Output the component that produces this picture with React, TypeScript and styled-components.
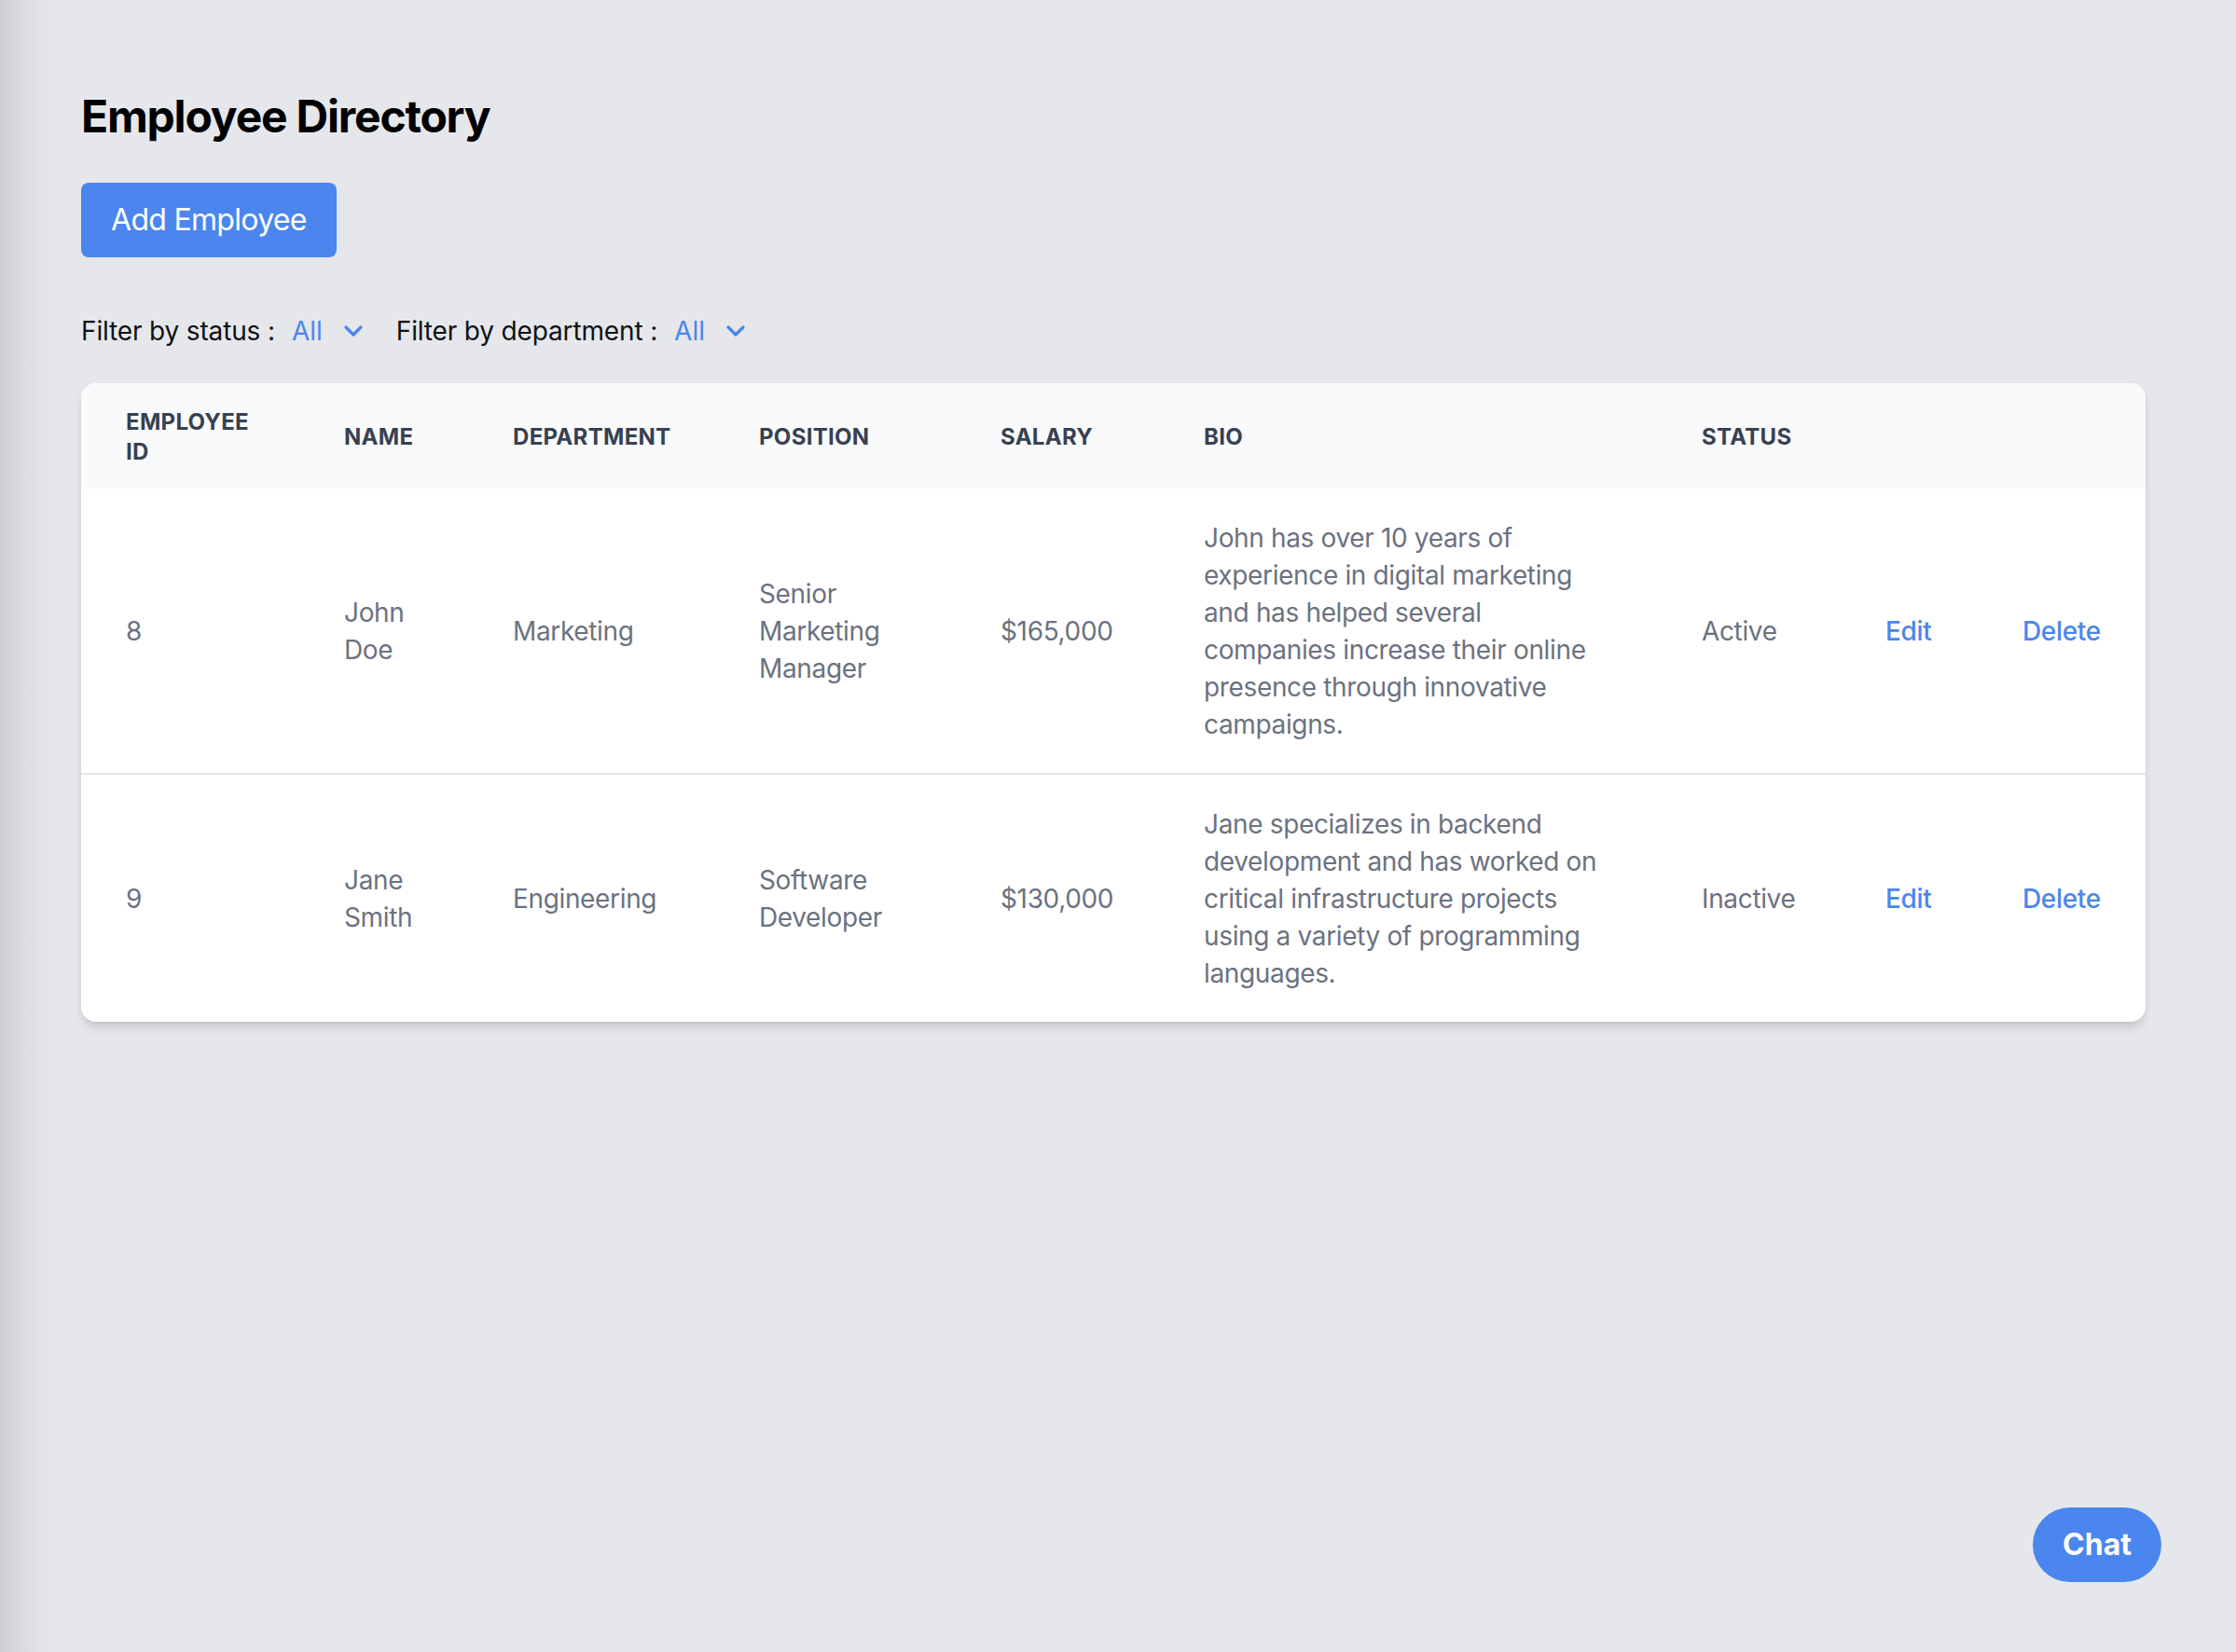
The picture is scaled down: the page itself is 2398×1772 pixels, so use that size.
import React from "react";
import styled, { createGlobalStyle } from "styled-components";

const GlobalStyle = createGlobalStyle`
  html, body {
    margin: 0;
    padding: 0;
  }
  body {
    min-height: 100vh;
    background: linear-gradient(to right, #cdcfd3 0px, #d9dadf 20px, #e2e3e7 45px, #e5e7eb 64px, #e5e7eb 100%);
    font-family: Inter, "Noto Sans", "Liberation Sans", sans-serif;
    color: #111827;
  }
  * { box-sizing: border-box; }
`;

const Page = styled.div`
  min-height: 100vh;
  padding: 93px 97px 0 87px;
`;

const Title = styled.h1`
  margin: 0;
  font-size: 48px;
  line-height: 64px;
  font-weight: 700;
  color: #000;
  letter-spacing: -1.2px;
`;

const PrimaryButton = styled.button`
  display: inline-block;
  margin-top: 39px;
  height: 80px;
  padding: 0 32px;
  border: none;
  border-radius: 8px;
  background: #4a86ee;
  color: #fff;
  font-family: inherit;
  font-size: 32px;
  line-height: 48px;
  font-weight: 400;
  letter-spacing: -0.7px;
  cursor: pointer;
`;

const FilterBar = styled.div`
  display: flex;
  align-items: center;
  gap: 35px;
  margin-top: 59px;
  height: 40px;
`;

const FilterGroup = styled.div`
  display: flex;
  align-items: center;
  gap: 18px;
`;

const FilterLabel = styled.span`
  font-size: 28px;
  line-height: 40px;
  color: #111;
  letter-spacing: -0.15px;
`;

const Select = styled.span`
  display: inline-flex;
  align-items: center;
  gap: 22px;
  font-size: 28px;
  line-height: 40px;
  color: #4a86ee;
`;

const Card = styled.div`
  margin-top: 36px;
  background: #fff;
  border-radius: 16px;
  overflow: hidden;
  box-shadow: 0 8px 12px -2px rgba(0, 0, 0, 0.12), 0 3px 6px -2px rgba(0, 0, 0, 0.08);
`;

const Table = styled.table`
  width: 100%;
  table-layout: fixed;
  border-collapse: collapse;
`;

const HeadRow = styled.tr`
  background: #f9fafb;
`;

const HeadCell = styled.th`
  padding: 26px 48px 23px;
  text-align: left;
  vertical-align: middle;
  font-size: 24px;
  line-height: 32px;
  font-weight: 700;
  letter-spacing: 0.3px;
  text-transform: uppercase;
  color: #374151;
`;

const BodyRow = styled.tr`
  & + & td {
    border-top: 2px solid #e5e7eb;
  }
`;

const Cell = styled.td<{ $link?: boolean }>`
  padding: 33px 48px 32px;
  vertical-align: middle;
  font-size: 28px;
  line-height: 40px;
  letter-spacing: -0.35px;
  color: ${(p) => (p.$link ? "#4a86ee" : "#6b7280")};
  font-weight: ${(p) => (p.$link ? 500 : 400)};
`;

const ChatButton = styled.button`
  position: fixed;
  right: 80px;
  bottom: 75px;
  height: 80px;
  padding: 0 32px;
  border: none;
  border-radius: 40px;
  background: #4a86ee;
  color: #fff;
  font-family: inherit;
  font-size: 32px;
  line-height: 48px;
  font-weight: 700;
  cursor: pointer;
`;

const Chevron = () => (
  <svg width="22" height="14" viewBox="0 0 22 14" fill="none">
    <path d="M3 3l8 8 8-8" stroke="#4a86ee" strokeWidth="3.2" strokeLinecap="round" strokeLinejoin="round" />
  </svg>
);

const colWidths = [234, 181, 264, 259, 218, 534, 197, 147, 180];

const employees = [
  {
    id: 8,
    name: "John Doe",
    department: "Marketing",
    position: "Senior Marketing Manager",
    salary: "$165,000",
    bio: "John has over 10 years of experience in digital marketing and has helped several companies increase their online presence through innovative campaigns.",
    status: "Active",
  },
  {
    id: 9,
    name: "Jane Smith",
    department: "Engineering",
    position: "Software Developer",
    salary: "$130,000",
    bio: "Jane specializes in backend development and has worked on critical infrastructure projects using a variety of programming languages.",
    status: "Inactive",
  },
];

const headers = ["Employee ID", "Name", "Department", "Position", "Salary", "Bio", "Status", "", ""];

export default function App() {
  return (
    <>
      <GlobalStyle />
      <Page>
        <Title>Employee Directory</Title>
        <PrimaryButton>Add Employee</PrimaryButton>
        <FilterBar>
          <FilterGroup>
            <FilterLabel>Filter by status :</FilterLabel>
            <Select>
              All <Chevron />
            </Select>
          </FilterGroup>
          <FilterGroup>
            <FilterLabel>Filter by department :</FilterLabel>
            <Select>
              All <Chevron />
            </Select>
          </FilterGroup>
        </FilterBar>
        <Card>
          <Table>
            <colgroup>
              {colWidths.map((w, i) => (
                <col key={i} style={{ width: w }} />
              ))}
            </colgroup>
            <thead>
              <HeadRow>
                {headers.map((h, i) => (
                  <HeadCell key={i}>{h}</HeadCell>
                ))}
              </HeadRow>
            </thead>
            <tbody>
              {employees.map((e) => (
                <BodyRow key={e.id}>
                  <Cell>{e.id}</Cell>
                  <Cell>{e.name}</Cell>
                  <Cell>{e.department}</Cell>
                  <Cell>{e.position}</Cell>
                  <Cell>{e.salary}</Cell>
                  <Cell>{e.bio}</Cell>
                  <Cell>{e.status}</Cell>
                  <Cell $link>Edit</Cell>
                  <Cell $link>Delete</Cell>
                </BodyRow>
              ))}
            </tbody>
          </Table>
        </Card>
      </Page>
      <ChatButton>Chat</ChatButton>
    </>
  );
}
